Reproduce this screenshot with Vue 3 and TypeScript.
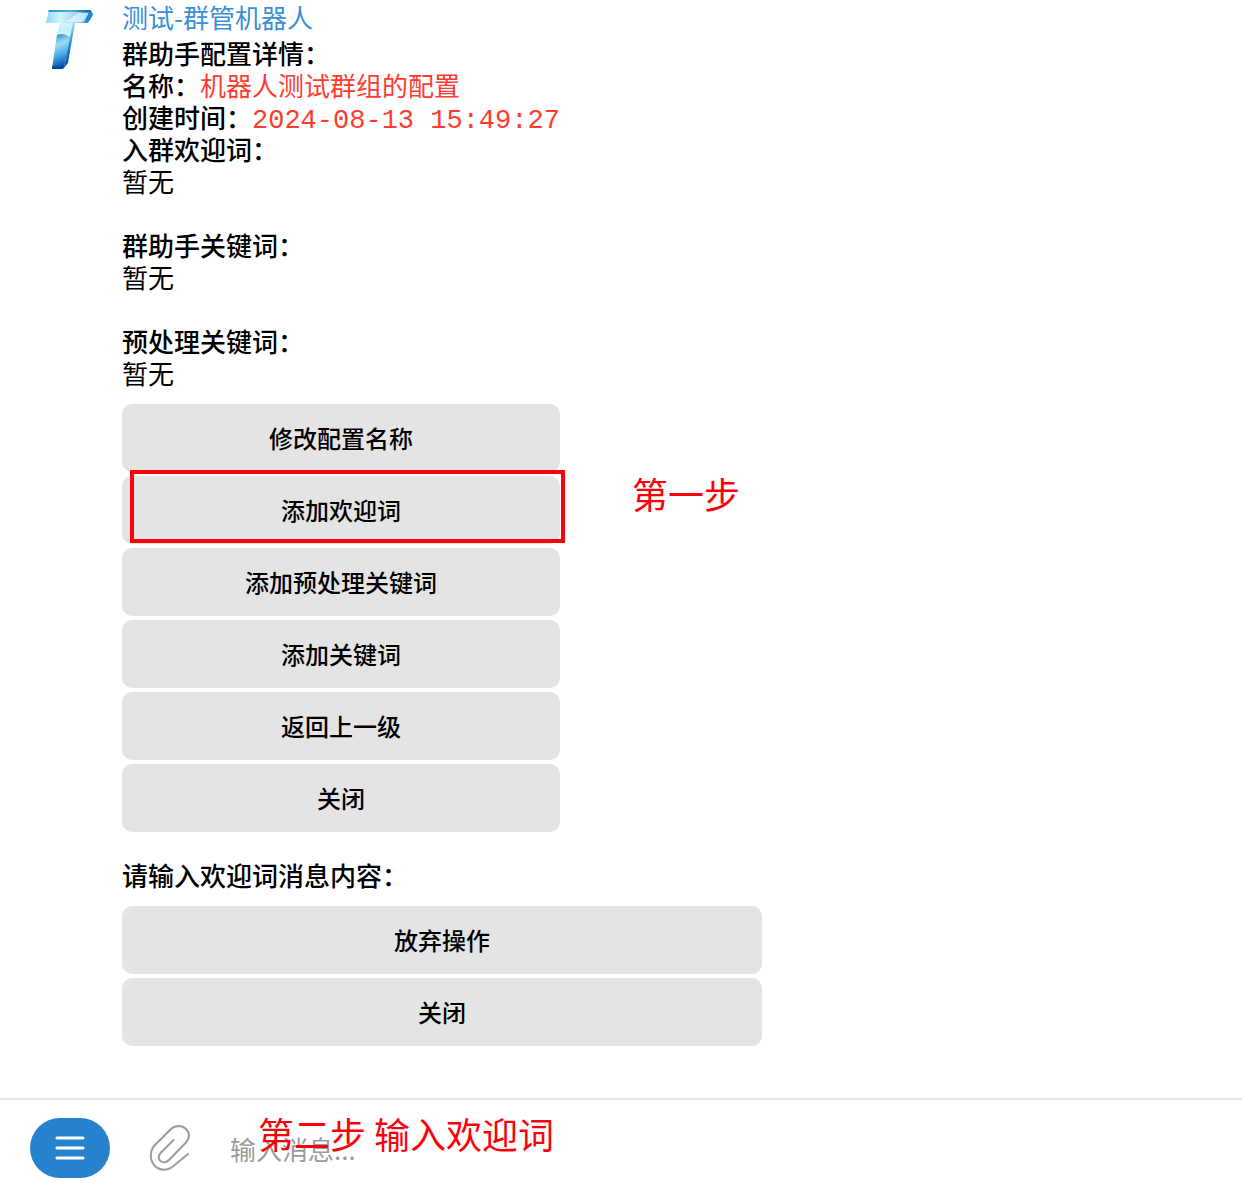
<script setup lang="ts">
import { ref } from 'vue'

interface Section {
  title: string
  body: string
}

const sections: Section[] = [
  { title: '入群欢迎词：', body: '暂无' },
  { title: '群助手关键词：', body: '暂无' },
  { title: '预处理关键词：', body: '暂无' },
]

interface Action {
  label: string
  step?: string
}

const configActions: Action[] = [
  { label: '修改配置名称' },
  { label: '添加欢迎词', step: '第一步' },
  { label: '添加预处理关键词' },
  { label: '添加关键词' },
  { label: '返回上一级' },
  { label: '关闭' },
]

const promptActions: string[] = ['放弃操作', '关闭']
const draft = ref('')
</script>

<template>
  <div class="chat">
    <main class="thread">
      <svg class="avatar" viewBox="0 0 50 62" aria-hidden="true">
        <defs>
          <linearGradient id="bar" x1="0" y1="0" x2="1" y2="0">
            <stop offset="0" stop-color="#8fd8f5" />
            <stop offset="0.3" stop-color="#d4f3fc" />
            <stop offset="0.65" stop-color="#9dd6f0" />
            <stop offset="1" stop-color="#1b78c4" />
          </linearGradient>
          <linearGradient id="edge" x1="0" y1="0" x2="1" y2="0">
            <stop offset="0" stop-color="#2f95cd" />
            <stop offset="0.5" stop-color="#4fb0dd" />
            <stop offset="1" stop-color="#0b5ca8" />
          </linearGradient>
          <linearGradient id="stem" x1="0" y1="0" x2="0" y2="1">
            <stop offset="0" stop-color="#d5f4fd" />
            <stop offset="0.55" stop-color="#c4ecfb" />
            <stop offset="1" stop-color="#e9fbff" />
          </linearGradient>
          <linearGradient id="foot" x1="0" y1="0" x2="0.2" y2="1">
            <stop offset="0" stop-color="#1680c6" />
            <stop offset="0.35" stop-color="#9bdcf6" />
            <stop offset="0.65" stop-color="#4fb0e6" />
            <stop offset="1" stop-color="#0a55ac" />
          </linearGradient>
          <linearGradient id="side" x1="0" y1="0" x2="0" y2="1">
            <stop offset="0" stop-color="#8fdaf7" />
            <stop offset="0.5" stop-color="#1f86d2" />
            <stop offset="1" stop-color="#0a4ea4" />
          </linearGradient>
        </defs>
        <path d="M5 1H46L49 5L44 14H31L30 17H15L16 14H2Z" fill="url(#bar)" />
        <path d="M5 1H46L48 3H4Z" fill="url(#edge)" />
        <path d="M34 4H45L39 13H22Z" fill="#e3f8fe" opacity="0.75" />
        <path d="M45 3L49 5L46 11L41 14Z" fill="#1689d0" />
        <path d="M16 14H31L26 29L13 26Z" fill="url(#stem)" />
        <path d="M13 26Q19 23 26 28L20 59H8Z" fill="url(#foot)" />
        <path d="M29 14H31L24 54L20 59L26 28Z" fill="url(#side)" />
        <path d="M8 57H21L19 60H8Z" fill="#084a9c" />
      </svg>

      <div class="messages">
        <article class="message config">
          <h1 class="sender">测试-群管机器人</h1>
          <p class="strong">群助手配置详情：</p>
          <p><b>名称：</b><span class="value">机器人测试群组的配置</span></p>
          <p><b>创建时间：</b><code class="value">2024-08-13 15:49:27</code></p>
          <section v-for="section in sections" :key="section.title" class="section">
            <h2>{{ section.title }}</h2>
            <p>{{ section.body }}</p>
          </section>
          <div class="actions">
            <div v-for="action in configActions" :key="action.label" class="action">
              <button type="button">{{ action.label }}</button>
              <template v-if="action.step">
                <span class="frame"></span>
                <span class="note step-one">{{ action.step }}</span>
              </template>
            </div>
          </div>
        </article>

        <article class="message prompt">
          <p class="strong">请输入欢迎词消息内容：</p>
          <div class="actions">
            <button v-for="label in promptActions" :key="label" type="button">{{ label }}</button>
          </div>
        </article>
      </div>
    </main>

    <footer class="composer">
      <button class="menu" type="button" aria-label="菜单">
        <svg viewBox="0 0 30 24" width="30" height="24" aria-hidden="true">
          <path d="M2 2H28M2 12H28M2 22H28" stroke="#fff" stroke-width="3" stroke-linecap="round" />
        </svg>
      </button>
      <button class="attach" type="button" aria-label="附件">
        <svg viewBox="0 0 42 48" width="42" height="48" fill="none" stroke="#9b9b9b" stroke-width="2" stroke-linecap="round" stroke-linejoin="round" aria-hidden="true">
          <path d="M24.500 16L12 28.500C9 31.500 9 35 11.500 37C14 39 17.500 38.500 20 36L36.500 19C41 14.500 41 9 37 5C33 1 26.500 1 22 5L6 21C0.500 26.500 0.500 36 5.500 41.500C10.500 47 18.500 47 24.500 42L39 30" />
        </svg>
      </button>
      <div class="field">
        <input v-model="draft" type="text" aria-label="输入消息" placeholder="输入消息..." />
        <span class="note step-two">第二步 输入欢迎词</span>
      </div>
    </footer>
  </div>
</template>

<style>
body {
  margin: 0;
  background: #fff;
}
</style>

<style scoped>
.chat {
  display: flex;
  flex-direction: column;
  min-height: 100vh;
  color: #000;
  font-family: "Noto Sans CJK SC", sans-serif;
  font-size: 26px;
  line-height: 32px;
}

.thread {
  display: flex;
  flex: 1;
  align-items: flex-start;
  gap: 28px;
  padding: 1px 44px 52px;
}

.avatar {
  flex: none;
  width: 50px;
  height: 62px;
  margin-top: 8px;
}

.messages {
  display: flex;
  flex: 1;
  flex-direction: column;
  gap: 27px;
}

.message {
  width: 100%;
}

.config {
  max-width: 438px;
}

.prompt {
  max-width: 640px;
}

h1,
h2,
p {
  margin: 0;
  font-size: 26px;
  font-weight: 400;
  white-space: nowrap;
}

.sender {
  margin-bottom: 4px;
  color: #3a8fd8;
}

h2,
b,
.strong {
  font-weight: 500;
}

.value {
  color: #ff3b30;
}

code {
  font-family: "Liberation Mono", monospace;
  font-size: 27px;
  line-height: 16px;
}

.section + .section {
  margin-top: 32px;
}

.actions {
  display: flex;
  flex-direction: column;
  gap: 4px;
  margin-top: 15px;
}

.action {
  position: relative;
}

button {
  border: 0;
  padding: 0;
  font-family: inherit;
  cursor: pointer;
}

.actions button {
  display: block;
  width: 100%;
  height: 68px;
  border-radius: 10px;
  background: #e4e4e4;
  color: #000;
  font-size: 24px;
  font-weight: 500;
  line-height: 32px;
}

.frame {
  position: absolute;
  top: -6px;
  right: -5px;
  bottom: 1px;
  left: 8px;
  border: 4px solid #ff000a;
  pointer-events: none;
}

.note {
  position: absolute;
  color: #ff000a;
  font-size: 36px;
  line-height: 40px;
  white-space: nowrap;
  pointer-events: none;
}

.step-one {
  top: -3px;
  left: 510px;
}

.composer {
  display: flex;
  align-items: center;
  border-top: 2px solid #e6e6e6;
  padding: 18px 30px 10px;
}

.menu {
  display: flex;
  align-items: center;
  justify-content: center;
  width: 80px;
  height: 60px;
  border-radius: 30px;
  background: #2782ce;
}

.attach {
  display: flex;
  margin-left: 39px;
  background: none;
}

.field {
  position: relative;
  flex: 1;
  margin-left: 39px;
}

input {
  display: block;
  box-sizing: border-box;
  width: 100%;
  height: 60px;
  border: 0;
  padding: 0;
  outline: none;
  background: none;
  color: #000;
  font-family: inherit;
  font-size: 26px;
}

input::placeholder {
  color: #9b9b9b;
  opacity: 1;
}

.step-two {
  top: -5px;
  left: 28px;
}
</style>
